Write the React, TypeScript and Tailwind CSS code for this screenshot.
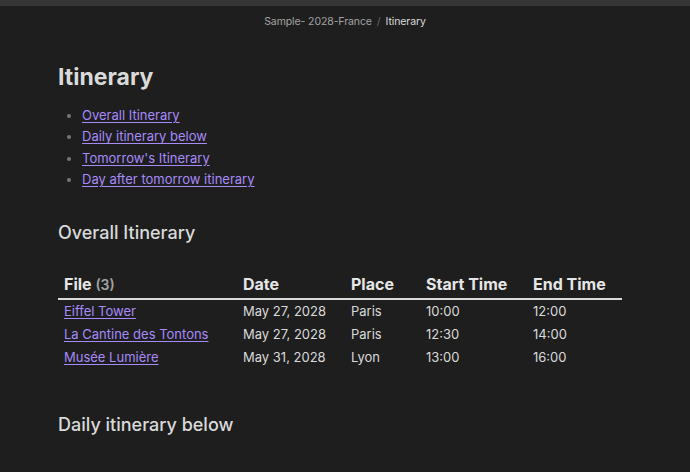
import React from 'react';

const rows = [
  { file: 'Eiffel Tower', date: 'May 27, 2028', place: 'Paris', start: '10:00', end: '12:00' },
  { file: 'La Cantine des Tontons', date: 'May 27, 2028', place: 'Paris', start: '12:30', end: '14:00' },
  { file: 'Musée Lumière', date: 'May 31, 2028', place: 'Lyon', start: '13:00', end: '16:00' },
];

const links = ['Overall Itinerary', 'Daily itinerary below', "Tomorrow's Itinerary", 'Day after tomorrow itinerary'];

export default function App() {
  return (
    <main className="h-[472px] overflow-hidden bg-[#1e1e1e] text-[#dadada] font-['Inter',sans-serif]">
      <div className="h-[6px] bg-[#363636]" />
      <div className="flex justify-center items-center h-[32px] text-[10.5px] gap-[5px] tracking-[-0.1px]">
        <span className="text-[#a3a3a3]">Sample- 2028-France</span>
        <span className="text-[#666]">/</span>
        <span className="text-[#dadada]">Itinerary</span>
      </div>
      <div className="pl-[58px]">
        <h1 className="text-[23px] font-bold leading-[30px] mt-[24px] text-[#dadada]">Itinerary</h1>
        <ul className="mt-[13px] pl-[24px] list-disc marker:text-[#777] text-[13px] leading-[21.3px]">
          {links.map((l) => (
            <li key={l}>
              <a className="text-[#a78bfa] underline underline-offset-2 decoration-1">{l}</a>
            </li>
          ))}
        </ul>
        <h2 className="text-[18px] font-medium leading-[24px] mt-[31px]">Overall Itinerary</h2>
        <table className="mt-[25px] w-[564px] border-collapse text-[13px] table-fixed">
          <colgroup>
            <col className="w-[179px]" />
            <col className="w-[108px]" />
            <col className="w-[75px]" />
            <col className="w-[107px]" />
            <col className="w-[95px]" />
          </colgroup>
          <thead>
            <tr className="border-b-2 border-[#dadada] h-[29px] text-left text-[16px] font-bold text-[#e6e6e6]">
              <th className="px-[6px] pb-[1px]">
                File <span className="text-[#a3a3a3] font-semibold text-[14px]">(3)</span>
              </th>
              <th className="px-[6px] pb-[1px]">Date</th>
              <th className="px-[6px] pb-[1px]">Place</th>
              <th className="px-[6px] pb-[1px]">Start Time</th>
              <th className="px-[6px] pb-[1px]">End Time</th>
            </tr>
          </thead>
          <tbody>
            {rows.map((r) => (
              <tr key={r.file} className="h-[23px]">
                <td className="px-[6px] pt-[2px]">
                  <a className="text-[#a78bfa] underline underline-offset-2 decoration-1">{r.file}</a>
                </td>
                <td className="px-[6px] pt-[2px]">{r.date}</td>
                <td className="px-[6px] pt-[2px]">{r.place}</td>
                <td className="px-[6px] pt-[2px]">{r.start}</td>
                <td className="px-[6px] pt-[2px]">{r.end}</td>
              </tr>
            ))}
          </tbody>
        </table>
        <h2 className="text-[18px] font-medium leading-[24px] mt-[45px]">Daily itinerary below</h2>
        <table className="mt-[30px] w-[564px] border-collapse text-[16px] font-bold text-left table-fixed">
          <colgroup>
            <col className="w-[287px]" />
            <col className="w-[111px]" />
            <col className="w-[166px]" />
          </colgroup>
          <thead>
            <tr className="h-[28px]">
              <th className="px-[6px]">File</th>
              <th className="px-[6px]">Place</th>
              <th className="px-[6px]">End Time</th>
            </tr>
          </thead>
        </table>
      </div>
    </main>
  );
}
